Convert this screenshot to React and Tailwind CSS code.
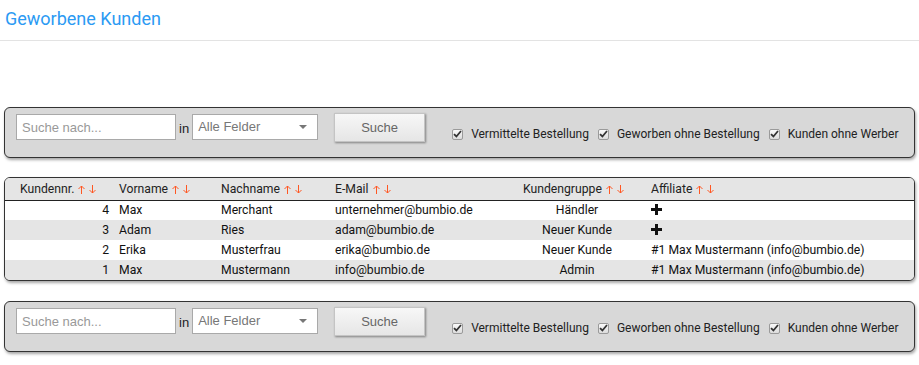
import React from 'react';

const ROWS = [
    { nr: 4, vorname: 'Max', nachname: 'Merchant', email: 'unternehmer@bumbio.de', gruppe: 'Händler', affiliate: null },
    { nr: 3, vorname: 'Adam', nachname: 'Ries', email: 'adam@bumbio.de', gruppe: 'Neuer Kunde', affiliate: null },
    { nr: 2, vorname: 'Erika', nachname: 'Musterfrau', email: 'erika@bumbio.de', gruppe: 'Neuer Kunde', affiliate: '#1 Max Mustermann (info@bumbio.de)' },
    { nr: 1, vorname: 'Max', nachname: 'Mustermann', email: 'info@bumbio.de', gruppe: 'Admin', affiliate: '#1 Max Mustermann (info@bumbio.de)' },
];

const SortArrows = () => (
    <span className="ml-[4px] inline-flex items-center gap-[4px] text-[#ff5722] align-[-1px]">
        <svg width="7" height="9" viewBox="0 0 7 9" fill="none" stroke="currentColor" strokeWidth="1">
            <path d="M3.5 9V1M0.5 4l3-3 3 3" />
        </svg>
        <svg width="7" height="9" viewBox="0 0 7 9" fill="none" stroke="currentColor" strokeWidth="1">
            <path d="M3.5 0v8M0.5 5l3 3 3-3" />
        </svg>
    </span>
);

const Check = ({ label }) => (
    <label className="flex items-center whitespace-nowrap">
        <span className="w-[11px] h-[11px] mr-[8px] rounded-[2px] border border-[#9a9a9a] bg-gradient-to-b from-[#fafafa] to-[#dcdcdc] flex items-center justify-center">
            <svg width="9" height="8" viewBox="0 0 9 8">
                <path d="M1 4.2l2.4 2.3L8 1" fill="none" stroke="#333" strokeWidth="1.8" />
            </svg>
        </span>
        <span className="text-[12px] text-[#222] mr-[9px]">{label}</span>
    </label>
);

const FilterBar = () => (
    <div className="mx-[4px] h-[51px] rounded-[6px] border border-[#333] bg-[#d8d8d8] shadow-[1px_2px_3px_rgba(0,0,0,0.35)] flex items-start pl-[11px] pt-[6px]">
        <input
            placeholder="Suche nach..."
            className="shrink-0 w-[160px] h-[26px] border border-[#a9a9a9] bg-white px-[5px] text-[13px] font-['Liberation_Sans'] placeholder:text-[#999] outline-none"
        />
        <span className="shrink-0 ml-[3px] mr-[3px] mt-[5px] text-[13px] font-['Liberation_Sans'] text-[#222]">in</span>
        <div className="shrink-0 w-[126px] h-[26px] border border-[#a9a9a9] bg-white px-[5px] flex items-center justify-between font-['Liberation_Sans'] text-[13px] text-[#777]">
            <span>Alle Felder</span>
            <span className="mr-[5px] w-0 h-0 border-l-[4px] border-r-[4px] border-t-[4px] border-l-transparent border-r-transparent border-t-[#777]" />
        </div>
        <button className="shrink-0 ml-[16px] -mt-[1px] w-[91px] h-[29px] border border-[#c4c4c4] bg-gradient-to-b from-[#f7f7f7] to-[#e6e6e6] shadow-[1px_1px_2px_rgba(0,0,0,0.4)] font-['Liberation_Sans'] text-[13px] text-[#666]">
            Suche
        </button>
        <div className="ml-[27px] mt-[11px] flex items-center font-['Roboto']">
            <Check label="Vermittelte Bestellung" />
            <Check label="Geworben ohne Bestellung" />
            <Check label="Kunden ohne Werber" />
        </div>
    </div>
);

export default function App() {
    return (
        <div className="w-[919px] h-[365px] bg-white overflow-hidden font-['Roboto']">
            <div className="h-[41px] border-b border-[#e3e3e3] pl-[5px] pt-[7px]">
                <h1 className="text-[18px] leading-[24px] text-[#2b9af3]">Geworbene Kunden</h1>
            </div>

            <div className="mt-[66px]">
                <FilterBar />
            </div>

            <div className="mx-[4px] mt-[19px] rounded-[6px] border border-[#333] bg-white overflow-hidden shadow-[1px_2px_3px_rgba(0,0,0,0.35)]">
                <table className="w-full border-collapse table-fixed text-[12.2px] text-[#111]">
                    <colgroup>
                        <col className="w-[108px]" />
                        <col className="w-[102px]" />
                        <col className="w-[114px]" />
                        <col className="w-[180px]" />
                        <col className="w-[136px]" />
                        <col />
                    </colgroup>
                    <thead>
                        <tr className="h-[22px] bg-[#e5e5e5] border-b border-[#222] text-[#222]">
                            <th className="text-left font-normal pl-[15px]">Kundennr.<SortArrows /></th>
                            <th className="text-left font-normal pl-[6px]">Vorname<SortArrows /></th>
                            <th className="text-left font-normal pl-[6px]">Nachname<SortArrows /></th>
                            <th className="text-left font-normal pl-[6px]">E-Mail<SortArrows /></th>
                            <th className="text-left font-normal pl-[14px]">Kundengruppe<SortArrows /></th>
                            <th className="text-left font-normal pl-[6px]">Affiliate<SortArrows /></th>
                        </tr>
                    </thead>
                    <tbody>
                        {ROWS.map((r, i) => (
                            <tr key={r.nr} className={`h-[20px] ${i % 2 ? 'bg-[#e5e5e5]' : 'bg-white'}`}>
                                <td className="text-right pr-[4px]">{r.nr}</td>
                                <td className="pl-[6px]">{r.vorname}</td>
                                <td className="pl-[6px]">{r.nachname}</td>
                                <td className="pl-[6px]">{r.email}</td>
                                <td className="text-center">{r.gruppe}</td>
                                <td className="pl-[6px]">
                                    {r.affiliate ? r.affiliate : (
                                        <svg width="11" height="11" viewBox="0 0 11 11" className="inline-block align-[-1px]">
                                            <path d="M4 0h3v4h4v3H7v4H4V7H0V4h4z" fill="#111" />
                                        </svg>
                                    )}
                                </td>
                            </tr>
                        ))}
                    </tbody>
                </table>
            </div>

            <div className="mt-[20px]">
                <FilterBar />
            </div>
        </div>
    );
}
